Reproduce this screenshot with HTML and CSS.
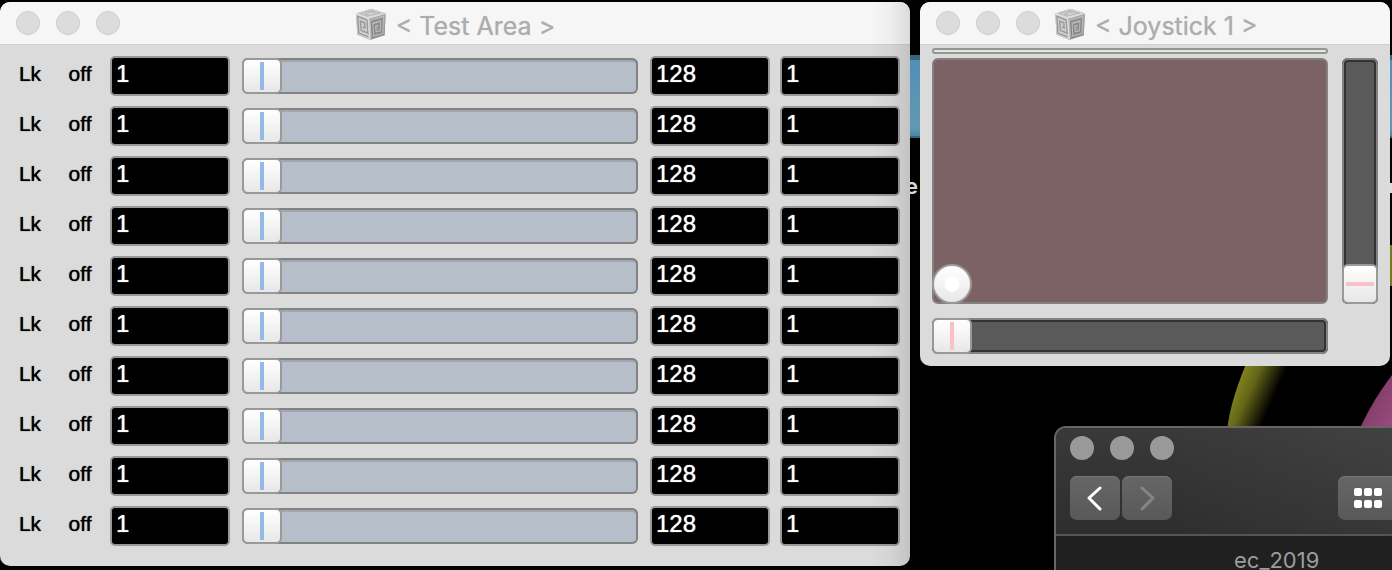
FILE: index.html
```
<!DOCTYPE html>
<html lang="en">
<head>
<meta charset="utf-8">
<title>Test Area</title>
<link rel="stylesheet" href="styles.css">
<script src="script.js" defer></script>
</head>
<body>
<svg width="0" height="0" class="defs" aria-hidden="true">
  <defs>
    <linearGradient id="cube-right" x1="0" y1="0" x2="0" y2="1"><stop offset="0" stop-color="#a8a8a8"/><stop offset="1" stop-color="#909090"/></linearGradient>
  </defs>
  <symbol id="cube" viewBox="0 0 90 93">
    <path d="M46 2 L88 15 L85 79 L43 92 L6 78 L2 16 Z" fill="#999"/>
    <path d="M46 2 L88 15 L38 30 L2 16 Z" fill="#dadada"/>
    <path d="M2 16 L38 30 L43 92 L6 78 Z" fill="#cecece"/>
    <path d="M38 30 L88 15 L85 79 L43 92 Z" fill="url(#cube-right)"/>
    <path d="M38 25 L14 16 L46 7 L73 15 L42 22 L30 17 L46 12 L58 15" fill="none" stroke="#b4b4b4" stroke-width="3"/>
    <path d="M38 84 L10 73 L7 24 L34 35 L37 73 L17 65 L15 38 L27 43 L28 58 L22 56" fill="none" stroke="#999" stroke-width="4"/>
    <path d="M46 86 L43 35 L82 24 L80 74 L53 81 L51 45 L74 38 L73 66 L60 70 L59 53 L66 51" fill="none" stroke="#bdbdbd" stroke-width="3"/>
    <path d="M50 79 L47 40 L78 31 L76 70 L57 75 L55 49 L70 45 L69 62" fill="none" stroke="#848484" stroke-width="3"/>
    <path d="M2 16 L38 30 L88 15 M38 30 L43 92" fill="none" stroke="#dedede" stroke-width="4"/>
  </symbol>
</svg>
<main class="desktop">
  <div class="folder"></div>
  <span class="folder-name">e</span>
  <span class="folder-mark"></span>
  <svg class="wallpaper" viewBox="0 0 192 190" aria-hidden="true">
    <defs>
      <linearGradient id="olive" gradientUnits="userSpaceOnUse" x1="34" y1="145" x2="72" y2="162">
        <stop offset="0" stop-color="#85861f"/><stop offset=".4" stop-color="#656718"/><stop offset="1" stop-color="#000"/>
      </linearGradient>
      <linearGradient id="pink" x1="0" y1="0" x2="1" y2="1">
        <stop offset="0" stop-color="#74345c"/><stop offset="1" stop-color="#9b4c80"/>
      </linearGradient>
    </defs>
    <path d="M27 190 Q31 157 50 115 L130 115 L100 190 Z" fill="url(#olive)"/>
    <path d="M161 186 Q173 160 192 135 L192 190 L161 190 Z" fill="url(#pink)"/>
    <path d="M190 5 H192 V46 H190 Z" fill="#777a1c"/>
  </svg>

  <section class="window test-window" aria-label="Test Area">
    <header class="titlebar">
      <div class="lights"><button type="button" aria-label="Close"></button><button type="button" aria-label="Minimize"></button><button type="button" aria-label="Zoom"></button></div>
      <h1 class="title"><svg class="cube" aria-hidden="true"><use href="#cube"/></svg>&lt; Test Area &gt;</h1>
    </header>
    <div class="rows" id="rows"></div>
  </section>

  <section class="window joy-window" aria-label="Joystick 1">
    <header class="titlebar">
      <div class="lights"><button type="button" aria-label="Close"></button><button type="button" aria-label="Minimize"></button><button type="button" aria-label="Zoom"></button></div>
      <h1 class="title"><svg class="cube" aria-hidden="true"><use href="#cube"/></svg>&lt; Joystick 1 &gt;</h1>
    </header>
    <div class="joy">
      <div class="strip"></div>
      <div class="pad"><button type="button" class="puck" aria-label="Joystick position"></button></div>
      <input type="range" class="slider dark vertical" min="0" max="100" value="0" aria-label="Y axis">
      <input type="range" class="slider dark horizontal" min="0" max="100" value="0" aria-label="X axis">
    </div>
  </section>

  <section class="finder" aria-label="ec_2019">
    <header class="finder-bar">
      <div class="finder-lights"><button type="button" aria-label="Close"></button><button type="button" aria-label="Minimize"></button><button type="button" aria-label="Zoom"></button></div>
      <div class="tools">
        <button type="button" class="tool" aria-label="Back"><svg width="50" height="44" viewBox="0 0 50 44"><path d="M30 12 L19 22 L30 33" stroke="#fff"/></svg></button>
        <button type="button" class="tool" aria-label="Forward"><svg width="50" height="44" viewBox="0 0 50 44"><path d="M20 12 L31 22 L20 33" stroke="#868686"/></svg></button>
        <button type="button" class="tool grid-tool" aria-label="Icon view"><svg width="60" height="44" viewBox="0 0 60 44" fill="#fff"><rect x="16" y="12" width="8" height="8" rx="2"/><rect x="26" y="12" width="8" height="8" rx="2"/><rect x="36" y="12" width="8" height="8" rx="2"/><rect x="16" y="24" width="8" height="8" rx="2"/><rect x="26" y="24" width="8" height="8" rx="2"/><rect x="36" y="24" width="8" height="8" rx="2"/></svg></button>
      </div>
    </header>
    <div class="tab">ec_2019</div>
  </section>
</main>
</body>
</html>
```
FILE: styles.css
```
* { box-sizing: border-box; }
body { margin: 0; background: #000; font-family: "Liberation Sans", Arial, sans-serif; }
button { padding: 0; border: 0; background: none; color: inherit; font: inherit; }
.defs { position: absolute; }
.desktop { position: relative; height: 100vh; overflow: hidden; background: #000; }

.window {
  position: absolute;
  top: 2px;
  overflow: hidden;
  border-radius: 10px;
  background: #dbdbdb;
}
.test-window { left: 0; width: 910px; }
.test-window::after {
  content: "";
  position: absolute;
  inset: 0 0 0 auto;
  width: 40px;
  background: linear-gradient(90deg, transparent, rgba(0, 0, 0, .03) 50%, rgba(0, 0, 0, .11));
  pointer-events: none;
}
.joy-window { left: 920px; width: 470px; }

.titlebar {
  display: flex;
  align-items: center;
  position: relative;
  height: 43px;
  padding: 0 16px;
  background: #f6f6f6;
  border-bottom: 1px solid #cfcfcf;
}
.lights, .finder-lights { display: flex; gap: 16px; }
.lights button { width: 24px; height: 24px; border: 1px solid #cdcdcd; border-radius: 50%; background: #dcdcdc; }
.title {
  display: flex;
  align-items: center;
  gap: 9px;
  margin: 0;
  padding-top: 6px;
  font: 400 25px/38px Inter, sans-serif;
  color: #acacac;
  text-shadow: 0 0 1px #c4c4c4;
  white-space: nowrap;
}
.test-window .title { position: absolute; left: 50%; transform: translateX(-50%); }
.joy-window .title { margin-left: 14px; }
.cube { width: 32px; height: 32px; margin-top: -4px; }

.rows { display: grid; gap: 10px; padding: 11px 10px 20px; }
.row {
  display: grid;
  grid-template-columns: 40px 60px 120px 1fr 120px 130px;
  align-items: center;
  height: 40px;
}
.toggle { height: 40px; padding-bottom: 4px; font-size: 21px; color: #000; text-shadow: 0 0 1px #000; }
.field {
  width: 100%;
  height: 40px;
  padding: 0 4px 4px;
  border: 2px solid #989898;
  border-radius: 5px;
  background: #000;
  color: #fff;
  font: 24px/32px "Liberation Sans", Arial, sans-serif;
  text-shadow: 0 0 1px #fff;
}
.row .slider { margin: 0 12px; }
.row .field:last-child { margin-left: 10px; width: 120px; }

.slider {
  -webkit-appearance: none;
  appearance: none;
  display: block;
  min-width: 0;
  height: 36px;
  margin: 0;
  border-radius: 6px;
  background: #b6bec9;
  box-shadow: inset 0 0 0 2px #828282, inset 0 4px 0 #a0a7b1;
}
.slider::-webkit-slider-thumb {
  -webkit-appearance: none;
  appearance: none;
  width: 40px;
  height: 36px;
  border: 2px solid #999;
  border-radius: 6px;
  background:
    linear-gradient(#93b9e7, #93b9e7) center / 4px 28px no-repeat,
    linear-gradient(#fff, #e7e7e7);
}
.slider.dark {
  background: #5a5a5a;
  box-shadow: inset 0 0 0 2px #828282, inset 0 0 0 4px #333;
}
.slider.dark::-webkit-slider-thumb {
  background:
    linear-gradient(#f7c0cb, #f7c0cb) center / 4px 28px no-repeat,
    linear-gradient(#fff, #e7e7e7);
}
.slider.vertical {
  grid-area: 2 / 2;
  width: 36px;
  height: 246px;
  writing-mode: vertical-lr;
  direction: rtl;
}
.slider.dark.vertical::-webkit-slider-thumb {
  width: 36px;
  height: 40px;
  background:
    linear-gradient(#f7c0cb, #f7c0cb) center / 28px 4px no-repeat,
    linear-gradient(#fff, #e7e7e7);
}
.slider.horizontal { grid-area: 3 / 1; margin-top: 10px; }

.joy {
  display: grid;
  grid-template-columns: 1fr 36px;
  gap: 4px 14px;
  padding: 3px 12px 12px;
}
.strip { grid-area: 1 / 1; height: 6px; border: 2px solid #949694; border-radius: 3px; background: #e2e5e2; }
.pad {
  grid-area: 2 / 1;
  display: flex;
  align-items: flex-end;
  height: 246px;
  border: 2px solid #828282;
  border-radius: 6px;
  background: #7c6165;
}
.puck {
  width: 40px;
  height: 40px;
  margin: 0 0 -2px -2px;
  border: 2px solid #999;
  border-radius: 50%;
  background: radial-gradient(circle, #fff 7px, transparent 8px), linear-gradient(#fff, #e7e7e7);
}

.folder {
  position: absolute;
  top: 55px;
  left: 860px;
  right: 0;
  height: 83px;
  border-top: 5px solid #3d6378;
  border-bottom: 2px solid #35657e;
  background: linear-gradient(#508fb8, #6399b0 90%, #4c86a2);
}
.folder-name { position: absolute; left: 905px; top: 173px; font: 600 22px/26px Inter, sans-serif; color: #d8d8d8; }
.folder-mark { position: absolute; right: 0; top: 183px; width: 2px; height: 10px; background: #ddd; }
.wallpaper { position: absolute; right: 0; top: 240px; width: 192px; height: 190px; }

.finder {
  position: absolute;
  top: 426px;
  left: 1054px;
  right: -40px;
  bottom: -20px;
  overflow: hidden;
  border: 2px solid #666;
  border-radius: 12px;
  background: #202020;
}
.finder-bar {
  padding: 8px 14px 14px;
  border-bottom: 2px solid #555;
  background: linear-gradient(90deg, rgba(255, 255, 255, 0) 30%, rgba(255, 255, 255, .05)), linear-gradient(#393939, #2e2e2e);
}
.finder-lights button { width: 24px; height: 24px; border-radius: 50%; background: #999; }
.tools { display: flex; gap: 2px; margin-top: 16px; }
.tool { width: 50px; height: 44px; border-radius: 7px; background: linear-gradient(#666, #595959); box-shadow: inset 0 1px #777; }
.tool svg { display: block; }
.tool path { fill: none; stroke-width: 3; stroke-linecap: round; stroke-linejoin: round; }
.grid-tool { width: 130px; margin-left: 164px; flex: none; }
.tab { padding: 12px 0 0 178px; font: 22px/24px Inter, sans-serif; color: #9d9d9d; }
```
FILE: script.js
```
const rows = document.getElementById("rows");
for (let n = 1; n <= 10; n++) {
  rows.insertAdjacentHTML("beforeend", `
    <div class="row">
      <button type="button" class="toggle">Lk</button>
      <button type="button" class="toggle">off</button>
      <input type="text" class="field" value="1" aria-label="Value ${n}">
      <input type="range" class="slider" min="1" max="128" value="1" aria-label="Level ${n}">
      <input type="text" class="field" value="128" aria-label="Maximum ${n}">
      <input type="text" class="field" value="1" aria-label="Step ${n}">
    </div>`);
}
```
